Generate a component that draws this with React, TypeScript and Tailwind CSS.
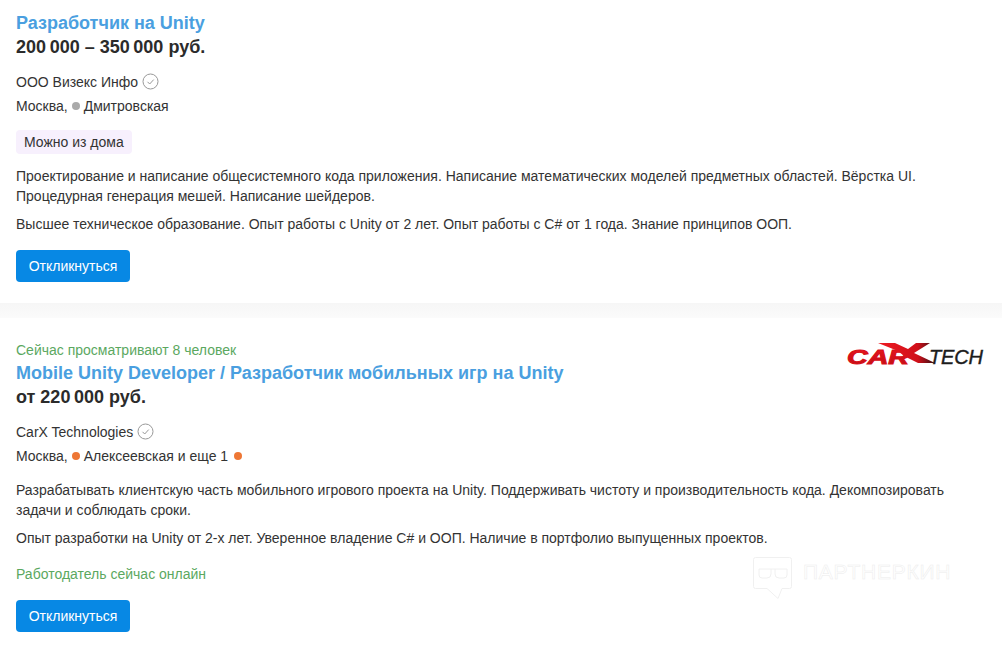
function Check() {
  return (
    <svg width="17" height="17" viewBox="0 0 17 17" fill="none" className="shrink-0 -mt-[1px]">
      <circle cx="8.5" cy="8.5" r="7.5" stroke="#999999" strokeWidth="1" />
      <path d="M5.5 8.8l2.2 2.2 4-4.4" stroke="#999999" strokeWidth="1" />
    </svg>
  );
}

function Dot({ color }: { color: string }) {
  return <span className={`inline-block w-2 h-2 rounded-full ${color}`} />;
}

function Button() {
  return (
    <button className="h-8 w-[114px] rounded-[4px] bg-[#0788e4] text-white text-[14px] leading-8 text-center block">
      Откликнуться
    </button>
  );
}

function Logo() {
  return (
    <svg width="138" height="26" viewBox="0 0 138 26" className="block">
      <defs>
        <linearGradient id="red" x1="0" y1="0" x2="0" y2="1">
          <stop offset="0" stopColor="#f01822" />
          <stop offset="1" stopColor="#b80d14" />
        </linearGradient>
        <linearGradient id="xg" x1="0" y1="0" x2="1" y2="0">
          <stop offset="0" stopColor="#ee1a22" />
          <stop offset="0.7" stopColor="#d0101a" />
          <stop offset="1" stopColor="#301015" />
        </linearGradient>
      </defs>
      <text x="1" y="22" fontFamily="'Liberation Sans', sans-serif" fontWeight="700" fontStyle="italic" fontSize="20" fill="url(#red)" stroke="#d81018" strokeWidth="1" textLength="62" lengthAdjust="spacingAndGlyphs">CAR</text>
      <polygon points="32,1 49,1 62,7 70,1 84,1 68,11 89,21 72,21 58,14 52,9" fill="url(#xg)" />
      <text x="83" y="22" fontFamily="'Liberation Sans', sans-serif" fontStyle="italic" fontSize="20" fill="#1c1c1c" stroke="#1c1c1c" strokeWidth="0.4" textLength="54" lengthAdjust="spacing">TECH</text>
    </svg>
  );
}

function Watermark() {
  return (
    <div className="absolute left-[753px] top-[557px] flex items-start gap-[10px]">
      <svg width="40" height="42" viewBox="0 0 40 42" fill="none" stroke="#f0f0f0" strokeWidth="1">
        <path d="M2.5 .5h34a2 2 0 0 1 2 2v27a2 2 0 0 1-2 2H29l-4 10-11-10H2.5a2 2 0 0 1-2-2V2.500a2 2 0 0 1 2-2z" />
        <path d="M6 12h28M6 12v6a3 3 0 0 0 3 3h5a4 4 0 0 0 4-4v-5M22 12v5a4 4 0 0 0 4 4h5a3 3 0 0 0 3-3v-6" />
      </svg>
      <span className="mt-[3px] text-[21px] leading-6 tracking-[0.75px] text-white [-webkit-text-stroke:0.5px_#ececec] [font-family:'Liberation_Sans',sans-serif]">
        ПАРТНЕРКИН
      </span>
    </div>
  );
}

export default function App() {
  return (
    <div className="relative w-[1002px] h-[650px] overflow-hidden bg-white text-[14px] leading-5 text-[#333333] [font-family:'Liberation_Sans',Arial,sans-serif]">
      <section className="h-[303px] px-4 pt-[11px]">
        <h2 className="text-[18px] leading-[24px] font-bold text-[#4a9fe0]">Разработчик на Unity</h2>
        <div className="text-[18px] leading-[24px] font-bold text-[#2b2b2b]">200{"\u2009"}000 – 350{"\u2009"}000 руб.</div>
        <div className="mt-[13px] flex items-center gap-[4px] h-5">
          <span>ООО Визекс Инфо</span>
          <Check />
        </div>
        <div className="mt-[4px] flex items-center h-5">
          <span>Москва,</span>
          <span className="ml-[4px] mr-[4px] flex"><Dot color="bg-[#aaaaaa]" /></span>
          <span>Дмитровская</span>
        </div>
        <div className="mt-[14px] inline-block h-6 rounded-[4px] bg-[#f7f0fd] px-2 leading-6 text-[#333]">Можно из дома</div>
        <p className="mt-[12px] w-[930px]">Проектирование и написание общесистемного кода приложения. Написание математических моделей предметных областей. Вёрстка UI. Процедурная генерация мешей. Написание шейдеров.</p>
        <p className="mt-[8px]">Высшее техническое образование. Опыт работы с Unity от 2 лет. Опыт работы с C# от 1 года. Знание принципов ООП.</p>
        <div className="mt-[16px]"><Button /></div>
      </section>

      <div className="h-[15px] bg-linear-to-b from-[#f6f6f6] to-[#fbfbfb]" />

      <section className="relative px-4 pt-[22px]">
        <div className="text-[#5ba85f] leading-5">Сейчас просматривают 8 человек</div>
        <h2 className="text-[18px] leading-[24px] font-bold text-[#4a9fe0] mt-[1px]">Mobile Unity Developer / Разработчик мобильных игр на Unity</h2>
        <div className="text-[18px] leading-[24px] font-bold text-[#2b2b2b]">от 220{"\u2009"}000 руб.</div>
        <div className="mt-[13px] flex items-center gap-[4px] h-5">
          <span>CarX Technologies</span>
          <Check />
        </div>
        <div className="mt-[4px] flex items-center h-5">
          <span>Москва,</span>
          <span className="ml-[4px] mr-[4px] flex"><Dot color="bg-[#ee7735]" /></span>
          <span>Алексеевская и еще 1</span>
          <span className="ml-[6px] flex"><Dot color="bg-[#ee7735]" /></span>
        </div>
        <p className="mt-[14px] w-[950px]">Разрабатывать клиентскую часть мобильного игрового проекта на Unity. Поддерживать чистоту и производительность кода. Декомпозировать задачи и соблюдать сроки.</p>
        <p className="mt-[8px]">Опыт разработки на Unity от 2-х лет. Уверенное владение C# и ООП. Наличие в портфолио выпущенных проектов.</p>
        <div className="mt-[16px] text-[#5ba85f]">Работодатель сейчас онлайн</div>
        <div className="mt-[16px]"><Button /></div>
        <div className="absolute right-[18px] top-[24px]"><Logo /></div>
      </section>
      <Watermark />
    </div>
  );
}
